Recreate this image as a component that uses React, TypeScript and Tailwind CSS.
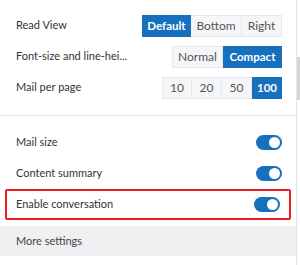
import React from "react";

const font = { fontFamily: 'Lato, "Open Sans", sans-serif' };

function Seg({ items, active, widths }: { items: string[]; active: number; widths: number[] }) {
  return (
    <div className="flex h-[22px]">
      {items.map((it, i) => (
        <div
          key={it}
          style={{ width: widths[i] }}
          className={
            i === active
              ? "flex items-center justify-center bg-[#1670bd] text-white font-bold text-[11.5px] border border-[#1670bd]"
              : "flex items-center justify-center bg-[#f5f6f7] text-[#555] text-[12px] border border-[#e6e8eb] " +
                (i > 0 ? "border-l-0" : "")
          }
        >
          {it}
        </div>
      ))}
    </div>
  );
}

function Toggle() {
  return (
    <div className="w-[26px] h-[15px] rounded-full bg-[#1670bd] flex items-center justify-end pr-[2px]">
      <div className="w-[11px] h-[11px] rounded-full bg-white" />
    </div>
  );
}

export default function App() {
  return (
    <div className="relative w-[300px] h-[265px] bg-white overflow-hidden" style={font}>
      <div className="w-[297px] h-full border-r border-[#e3e5e8] flex flex-col">
        <div className="pt-[10px] pb-[12px] pl-[16px] pr-[14px] flex flex-col">
          <div className="h-[31px] flex items-center justify-between">
            <span className="text-[11px] text-[#333]">Read View</span>
            <Seg items={["Default", "Bottom", "Right"]} active={0} widths={[49, 51, 40]} />
          </div>
          <div className="h-[31px] flex items-center justify-between">
            <span className="text-[11px] text-[#333]">Font-size and line-hei...</span>
            <Seg items={["Normal", "Compact"]} active={1} widths={[51, 59]} />
          </div>
          <div className="h-[31px] flex items-center justify-between">
            <span className="text-[11px] text-[#333]">Mail per page</span>
            <Seg items={["10", "20", "50", "100"]} active={3} widths={[30, 30, 30, 30]} />
          </div>
        </div>
        <div className="h-px bg-[#e8e9eb]" />
        <div className="pt-[11px] flex flex-col">
          <div className="h-[31px] mx-[5px] pl-[11px] pr-[9px] flex items-center justify-between">
            <span className="text-[11px] text-[#333]">Mail size</span>
            <Toggle />
          </div>
          <div className="h-[31px] mx-[5px] pl-[11px] pr-[9px] flex items-center justify-between">
            <span className="text-[11px] text-[#333]">Content summary</span>
            <Toggle />
          </div>
          <div className="h-[31px] mx-[5px] pl-[9px] pr-[9px] flex items-center justify-between border-2 border-[#ea1c24] rounded-[2px]">
            <span className="text-[11px] text-[#333]">Enable conversation</span>
            <Toggle />
          </div>
        </div>
        <div className="mt-[6px] h-[30px] bg-[#eef0f2] flex items-center pl-[16px]">
          <span className="text-[11px] text-[#444]">More settings</span>
        </div>
      </div>
      <div className="absolute right-0 top-[57px] w-[3px] h-[43px] bg-[#d4d6d9]" />
    </div>
  );
}
